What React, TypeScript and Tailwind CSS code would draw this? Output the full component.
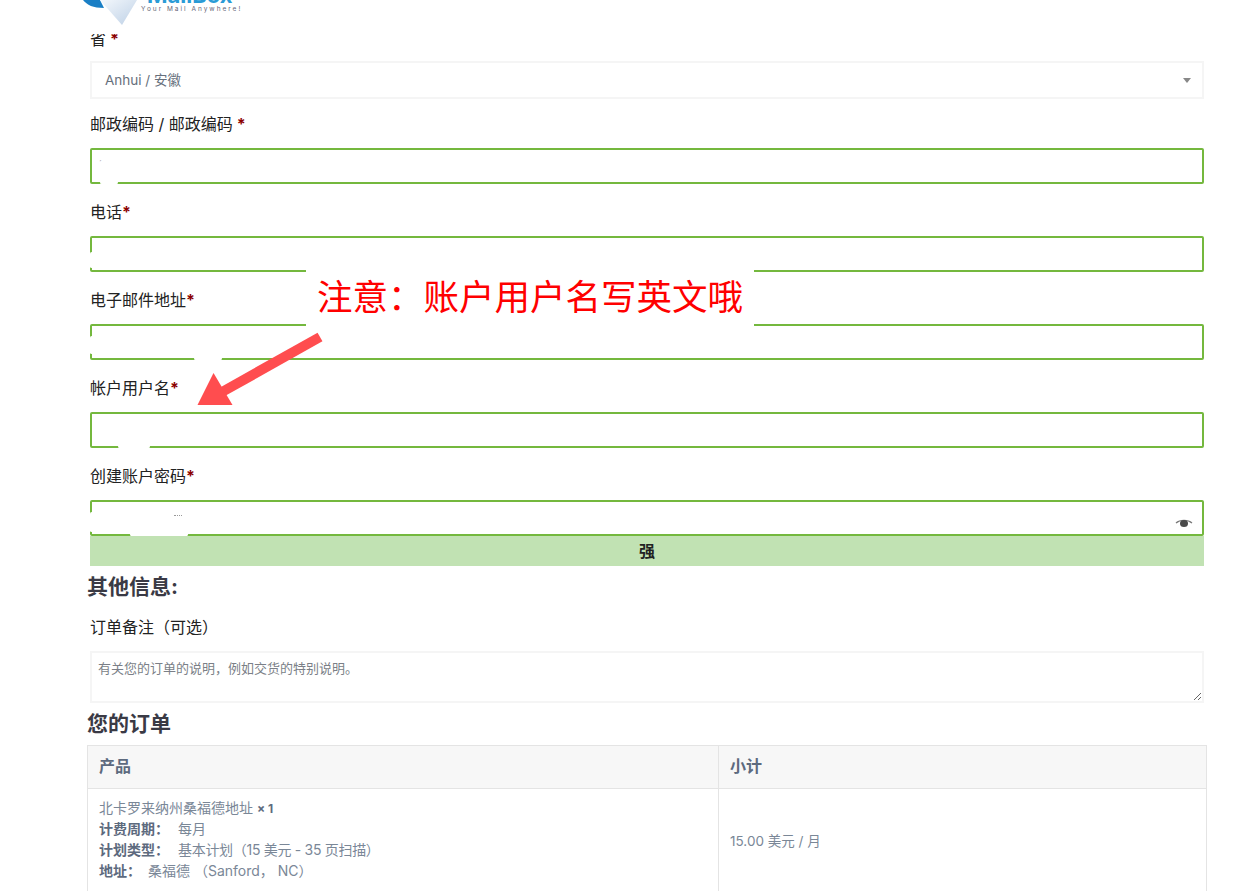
const FONT = "font-['Inter','Noto_Sans_CJK_SC',sans-serif]";

// white smudges where the original screenshot was scrubbed
const Smudge = ({ className }: { className: string }) => (
  <span className={`absolute bg-white rounded-full ${className}`} />
);

function Label({ text, star, spaced }: { text: string; star?: boolean; spaced?: boolean }) {
  return (
    <label className="block h-[24px] text-[16px] leading-[24px] text-[#222]">
      {text}
      {star && <span className={`font-bold text-[#8b0000] ${spaced ? "ml-1" : ""}`}>*</span>}
    </label>
  );
}

function Field({
  label,
  star,
  spaced,
  children,
}: {
  label: string;
  star?: boolean;
  spaced?: boolean;
  children?: React.ReactNode;
}) {
  return (
    <div className="flex flex-col gap-[12px]">
      <Label text={label} star={star} spaced={spaced} />
      <div className="relative flex h-[36px] items-center justify-end rounded-[2px] border-2 border-[#74b83e] bg-white pr-[9px]">
        {children}
      </div>
    </div>
  );
}

function Logo() {
  return (
    <div className="relative z-10 mb-[-7px] flex h-[34px] items-start overflow-hidden bg-white pl-[80px]">
      <svg className="shrink-0" width="60" height="28" viewBox="0 0 60 28">
        <defs>
          <linearGradient id="gem" x1="0" y1="0" x2="1" y2="1">
            <stop offset="0" stopColor="#f4f8fc" />
            <stop offset="1" stopColor="#bdd0e6" />
          </linearGradient>
        </defs>
        <path d="M3 0C7 5 13 8 24 8L20 0Z" fill="#1a7fc5" />
        <path d="M20 0L42 25L57 0Z" fill="url(#gem)" />
      </svg>
      <div className="ml-[1px] mt-[-17px] flex flex-col">
        <span className="ml-[6px] text-[22px] font-bold leading-[24px] text-[#2a9bd6]">MailBox</span>
        <span className="mt-[-2px] text-[6.500px] leading-[8px] tracking-[2px] text-[#667]">Your Mail Anywhere!</span>
      </div>
    </div>
  );
}

const Key = ({ children, gap = "mr-[9px]" }: { children: string; gap?: string }) => (
  <strong className={`${gap} text-[#5d6a7e]`}>{children}</strong>
);

function OrderTable() {
  return (
    <div className="ml-[-3px] w-[1120px] border border-b-0 border-[#e4e4e4]">
      <div className="grid h-[43px] grid-cols-[630px_1fr] border-b border-[#e4e4e4] bg-[#f7f7f7] text-[16px] font-bold leading-[40px] text-[#5d6a7e]">
        <div className="pl-[11px]">产品</div>
        <div className="border-l border-[#e4e4e4] pl-[11px]">小计</div>
      </div>
      <div className="grid h-[104px] grid-cols-[630px_1fr] text-[#7a8797]">
        <div className="flex flex-col pl-[11px] pt-[8px] text-[14px] leading-[21px]">
          <div className="h-[21px]">北卡罗来纳州桑福德地址 <strong className="text-[12px] text-[#5d6a7e]">× 1</strong></div>
          <div className="h-[21px]"><Key>{"计费周期\uFF1A"}</Key>每月</div>
          <div className="h-[21px]">
            <Key>{"计划类型\uFF1A"}</Key>
            <span className="tracking-[-0.3px]">{"基本计划\uFF0815 美元 - 35 页扫描\uFF09"}</span>
          </div>
          <div className="h-[21px]"><Key gap="mr-[7px]">{"地址\uFF1A"}</Key>{"桑福德 \uFF08Sanford\uFF0C NC\uFF09"}</div>
        </div>
        <div className="flex items-center border-l border-[#e4e4e4] pl-[11px] text-[13.500px] leading-[20px]">
          15.00 美元 / 月
        </div>
      </div>
    </div>
  );
}

export default function App() {
  return (
    <div className={`relative h-[891px] w-[1258px] overflow-hidden bg-white ${FONT}`}>
      <Logo />

      <div className="ml-[90px] flex w-[1114px] flex-col">
        <div className="flex flex-col gap-[10px]">
          <Label text="省" star spaced />
          <div className="flex h-[38px] items-center justify-between border-2 border-[#f5f5f5] pl-[13px] pr-[11px] pt-[1px] text-[13.500px] text-[#666f7c]">
            Anhui / 安徽
            <span className="h-0 w-0 border-x-[4px] border-t-[5px] border-x-transparent border-t-[#888]" />
          </div>
        </div>

        <div className="mt-[13px] flex flex-col gap-[16px]">
          <Field label="邮政编码 / 邮政编码" star spaced>
            <span className="absolute left-[7px] top-[9px] text-[9px] leading-[9px] text-[#aaa]">´</span>
            <Smudge className="bottom-[-2px] left-[8px] h-[3px] w-[18px]" />
          </Field>
          <Field label="电话" star>
            <Smudge className="left-[-2px] top-[14px] h-[16px] w-[3px]" />
          </Field>
          <Field label="电子邮件地址" star>
            <Smudge className="left-[-2px] top-[10px] h-[18px] w-[3px]" />
            <Smudge className="bottom-[-2px] left-[102px] h-[3px] w-[28px]" />
          </Field>
          <Field label="帐户用户名" star>
            <Smudge className="bottom-[-2px] left-[26px] h-[3px] w-[32px]" />
          </Field>
          <div className="flex flex-col">
            <Field label="创建账户密码" star>
              <span className="absolute left-[82px] top-[13px] h-[1px] w-[8px] border-t border-dotted border-[#999]" />
              <Smudge className="left-[-2px] top-[10px] h-[20px] w-[3px]" />
              <Smudge className="bottom-[-2px] left-[38px] h-[3px] w-[58px]" />
              <svg className="mt-[12px]" width="18" height="10" viewBox="0 0 18 10">
                <path d="M1 4C5 0.5 13 0.5 17 4" fill="none" stroke="#777" strokeWidth="1.2" />
                <ellipse cx="9" cy="4.5" rx="4" ry="3.6" fill="#4a4a4a" />
              </svg>
            </Field>
            <div className="h-[30px] bg-[#c1e2b3] text-center text-[16px] font-bold leading-[30px] text-[#222]">强</div>
          </div>
        </div>

        <h3 className="ml-[-3px] mt-[7px] text-[21px] font-bold leading-[28px] text-[#3a3a45]">其他信息:</h3>
        <div className="mt-[14px] flex flex-col gap-[12px]">
          <Label text={"订单备注\uFF08可选\uFF09"} />
          <textarea
            readOnly
            placeholder={"有关您的订单的说明\uFF0C例如交货的特别说明。"}
            className="block h-[52px] w-full border-2 border-[#f5f5f5] px-[6px] py-[5px] text-[13px] leading-[20px] placeholder:text-[#7b7f87]"
          />
        </div>

        <h3 className="ml-[-3px] mt-[7px] mb-[7px] text-[21px] font-bold leading-[28px] text-[#3a3a45]">您的订单</h3>
        <OrderTable />
      </div>

      {/* pasted note and arrow sit over the form */}
      <div className="absolute left-[306px] top-[268px] flex h-[59px] w-[448px] items-center justify-center bg-white text-[35.500px] font-normal leading-none text-[#ff0000]">
        {"注意\uFF1A账户用户名写英文哦"}
      </div>
      <svg className="absolute left-0 top-0" width="400" height="420" viewBox="0 0 400 420">
        <path d="M320 337L222 392" stroke="#ff4d4f" strokeWidth="10" fill="none" />
        <path d="M197.500 405L213.500 373L232.500 405Z" fill="#ff4d4f" />
      </svg>
    </div>
  );
}
